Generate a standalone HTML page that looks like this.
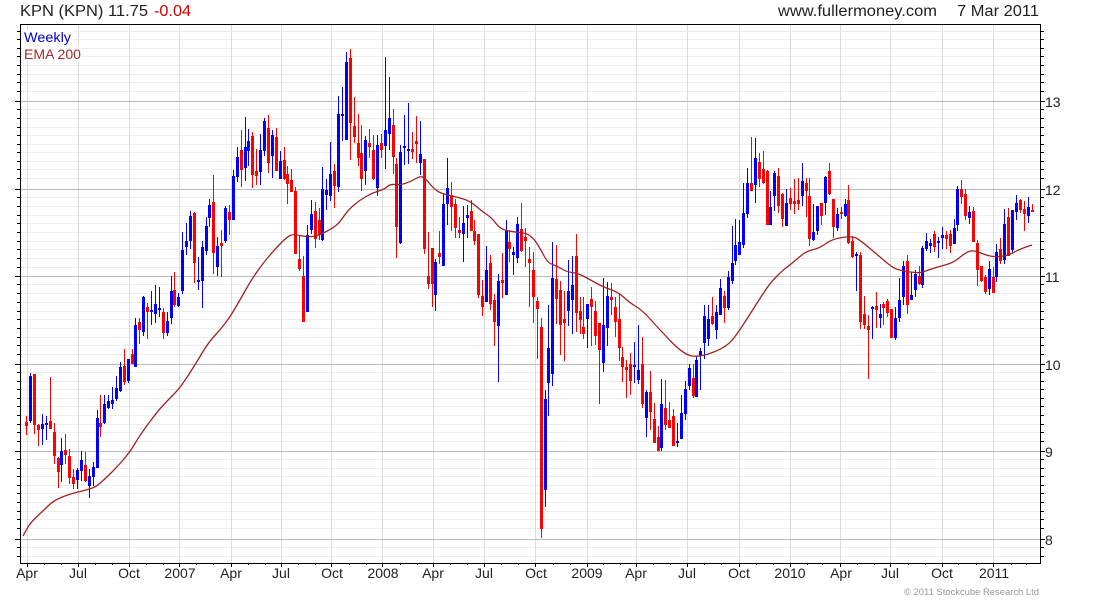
<!DOCTYPE html>
<html lang="en"><head><meta charset="utf-8"><title>KPN (KPN) chart</title>
<style>html,body{margin:0;padding:0;background:#fff;width:1100px;height:600px;overflow:hidden}svg{display:block}text{font-family:"Liberation Sans",Arial,sans-serif}</style>
</head><body>
<svg width="1100" height="600" viewBox="0 0 1100 600" xmlns="http://www.w3.org/2000/svg">
<rect width="1100" height="600" fill="#fff"/>
<g shape-rendering="crispEdges" fill="none">
<path stroke="#ececec" d="M21 31.5H1040M21 39.5H1040M21 48.5H1040M21 56.5H1040M21 65.5H1040M21 74.5H1040M21 82.5H1040M21 91.5H1040M21 109.5H1040M21 118.5H1040M21 127.5H1040M21 135.5H1040M21 144.5H1040M21 152.5H1040M21 161.5H1040M21 169.5H1040M21 178.5H1040M21 197.5H1040M21 206.5H1040M21 215.5H1040M21 223.5H1040M21 232.5H1040M21 241.5H1040M21 249.5H1040M21 258.5H1040M21 267.5H1040M21 284.5H1040M21 293.5H1040M21 302.5H1040M21 311.5H1040M21 319.5H1040M21 328.5H1040M21 337.5H1040M21 345.5H1040M21 354.5H1040M21 372.5H1040M21 381.5H1040M21 389.5H1040M21 398.5H1040M21 406.5H1040M21 415.5H1040M21 424.5H1040M21 432.5H1040M21 441.5H1040M21 459.5H1040M21 468.5H1040M21 476.5H1040M21 485.5H1040M21 493.5H1040M21 502.5H1040M21 511.5H1040M21 519.5H1040M21 528.5H1040M21 547.5H1040M21 556.5H1040"/>
<path stroke="#dcdcdc" d="M27.5 25V563M78.5 25V563M129.5 25V563M179.5 25V563M231.5 25V563M281.5 25V563M331.5 25V563M382.5 25V563M433.5 25V563M484.5 25V563M535.5 25V563M587.5 25V563M636.5 25V563M687.5 25V563M739.5 25V563M790.5 25V563M840.5 25V563M890.5 25V563M942.5 25V563M993.5 25V563"/>
<path stroke="#bcbcbc" d="M21 101.5H1040M21 189.5H1040M21 276.5H1040M21 364.5H1040M21 451.5H1040M21 539.5H1040"/>
<rect x="23" y="30" width="50" height="16" fill="#fff"/>
<rect x="23" y="46" width="59" height="16" fill="#fff"/>
</g>
<g fill="none" shape-rendering="crispEdges">
<path stroke="#0000ff" stroke-width="1" d="M30.5 373V423M42.5 414V445M46.5 416V440M61.5 438V482M77.5 468V489M81.5 451V481M89.5 469V498M93.5 462V486M97.5 410V468M104.5 395V424M108.5 395V409M112.5 387V409M116.5 376V401M120.5 362V392M128.5 359V383M135.5 318V367M143.5 296V336M151.5 291V325M155.5 285V323M159.5 287V317M167.5 312V336M171.5 276V324M178.5 293V307M182.5 232V294M186.5 223V255M190.5 211V249M198.5 257V290M202.5 241V308M206.5 217V255M209.5 199V227M217.5 237V276M225.5 206V243M233.5 170V220M237.5 147V182M245.5 117V181M248.5 129V166M260.5 134V185M264.5 118V156M272.5 130V178M280.5 151V179M307.5 225V312M311.5 200V234M322.5 167V241M326.5 179V210M330.5 142V201M338.5 96V192M342.5 87V141M346.5 52V140M365.5 136V185M377.5 135V196M385.5 57V169M389.5 77V150M400.5 145V244M404.5 115V165M408.5 103V164M420.5 121V175M435.5 259V311M443.5 194V266M447.5 158V225M463.5 206V262M467.5 205V238M486.5 246V302M498.5 274V382M506.5 220V295M513.5 247V275M517.5 217V263M545.5 390V507M548.5 305V416M552.5 242V386M568.5 260V326M572.5 256V334M587.5 304V348M603.5 278V372M607.5 282V346M634.5 342V383M638.5 325V384M646.5 390V437M661.5 379V451M677.5 423V447M681.5 395V439M685.5 381V420M689.5 364V390M696.5 356V397M700.5 348V390M704.5 305V359M708.5 305V346M716.5 305V339M720.5 279V315M728.5 271V310M732.5 226V284M735.5 219V265M739.5 220V255M743.5 183V248M747.5 168V218M755.5 138V203M770.5 191V225M774.5 171V211M786.5 189V226M802.5 163V206M813.5 204V241M817.5 206V235M825.5 176V215M837.5 208V231M845.5 199V217M856.5 252V291M872.5 306V339M880.5 304V328M895.5 307V340M899.5 278V322M903.5 261V305M911.5 272V300M915.5 270V297M922.5 246V288M926.5 233V251M930.5 239V253M938.5 237V258M942.5 227V249M954.5 219V244M957.5 186V231M969.5 206V224M989.5 261V295M996.5 244V282M1004.5 209V264M1012.5 210V252M1016.5 195V220M1028.5 197V223"/>
<path stroke="#ff0000" stroke-width="1" d="M26.5 416V435M34.5 374V434M38.5 424V446M50.5 377V429M54.5 423V464M58.5 457V488M65.5 434V464M69.5 449V484M73.5 469V489M85.5 452V482M100.5 395V437M124.5 349V385M132.5 349V364M139.5 318V344M147.5 303V339M163.5 308V339M174.5 272V307M194.5 212V283M213.5 175V274M221.5 230V277M229.5 205V235M241.5 130V187M252.5 132V188M256.5 149V185M268.5 115V173M276.5 128V171M284.5 147V180M287.5 166V204M291.5 169V192M295.5 187V254M299.5 235V271M303.5 256V322M315.5 202V248M319.5 208V240M334.5 164V208M350.5 49V160M354.5 97V143M358.5 114V166M361.5 125V191M369.5 129V158M373.5 135V180M381.5 134V158M393.5 109V174M396.5 158V258M412.5 132V159M416.5 116V163M424.5 159V254M428.5 232V289M432.5 248V307M439.5 231V264M451.5 182V231M455.5 199V238M459.5 217V238M471.5 200V231M474.5 220V245M478.5 234V298M482.5 280V316M490.5 255V310M494.5 294V346M502.5 253V298M509.5 230V262M521.5 203V252M525.5 228V267M529.5 247V307M533.5 252V323M537.5 297V359M541.5 318V538M556.5 245V324M560.5 281V355M564.5 291V361M576.5 234V332M580.5 297V334M583.5 297V339M591.5 287V346M595.5 301V345M599.5 323V404M611.5 283V315M615.5 297V337M619.5 293V361M622.5 347V382M626.5 360V398M630.5 353V395M642.5 337V408M650.5 371V430M654.5 403V443M658.5 426V451M665.5 380V430M669.5 402V428M673.5 409V446M693.5 364V398M712.5 297V325M724.5 291V323M751.5 137V191M759.5 153V187M763.5 151V184M767.5 170V225M778.5 168V213M782.5 193V227M790.5 188V210M794.5 179V214M798.5 178V210M806.5 178V217M809.5 178V246M821.5 203V225M829.5 163V195M833.5 199V238M841.5 207V219M848.5 185V244M852.5 236V258M860.5 252V329M864.5 296V329M868.5 315V379M876.5 292V328M883.5 302V325M887.5 299V317M891.5 309V338M907.5 255V314M919.5 266V285M934.5 231V252M946.5 231V249M950.5 230V253M961.5 180V204M965.5 189V220M973.5 207V242M977.5 240V286M981.5 266V282M985.5 275V294M993.5 267V293M1000.5 238V264M1008.5 208V256M1020.5 199V213M1024.5 201V231M1032.5 204V212"/>
<path stroke="#0000ff" stroke-width="3" d="M30.5 376V421M42.5 424V429M46.5 423V425M61.5 451V465M77.5 470V480M81.5 460V471M89.5 476V486M93.5 467V477M97.5 418V468M104.5 404V423M108.5 401V408M112.5 400V404M116.5 388V399M120.5 367V391M128.5 359V381M135.5 325V367M143.5 297V332M151.5 310V312M155.5 304V314M159.5 308V310M167.5 321V333M171.5 291V318M178.5 297V306M182.5 250V291M186.5 241V247M190.5 216V241M198.5 280V282M202.5 247V281M206.5 226V251M209.5 205V218M217.5 246V267M225.5 208V241M233.5 176V220M237.5 157V177M245.5 147V168M248.5 141V151M260.5 150V172M264.5 121V151M272.5 135V156M280.5 161V179M307.5 235V312M311.5 214V230M322.5 189V240M326.5 190V195M330.5 174V196M338.5 114V187M342.5 114V116M346.5 62V140M365.5 140V171M377.5 145V188M385.5 130V146M389.5 118V134M400.5 152V243M404.5 146V148M408.5 149V151M420.5 154V163M435.5 262V295M443.5 204V266M447.5 188V204M463.5 223V234M467.5 215V218M486.5 270V302M498.5 281V326M506.5 230V295M513.5 252V255M517.5 224V258M545.5 399V490M548.5 348V383M552.5 278V374M568.5 291V311M572.5 285V300M587.5 304V319M603.5 325V363M607.5 296V328M634.5 365V367M638.5 370V380M646.5 392V418M661.5 404V448M677.5 441V443M681.5 413V439M685.5 389V414M689.5 368V386M696.5 360V397M700.5 351V356M704.5 316V343M708.5 319V339M716.5 312V330M720.5 288V315M728.5 277V308M732.5 263V281M735.5 245V261M739.5 242V255M743.5 213V245M747.5 183V214M755.5 158V185M770.5 207V225M774.5 173V196M786.5 203V226M802.5 181V196M813.5 232V240M817.5 206V231M825.5 177V203M837.5 214V228M845.5 204V216M856.5 254V256M872.5 307V309M880.5 314V318M895.5 318V338M899.5 300V318M903.5 266V297M911.5 295V300M915.5 274V290M922.5 248V285M926.5 241V249M930.5 243V246M938.5 241V243M942.5 235V238M954.5 228V244M957.5 189V225M969.5 212V218M989.5 269V289M996.5 252V277M1004.5 224V260M1012.5 210V250M1016.5 203V212M1028.5 207V216"/>
<path stroke="#ff0000" stroke-width="3" d="M26.5 422V426M34.5 374V425M38.5 425V430M50.5 421V429M54.5 432V456M58.5 458V472M65.5 450V455M69.5 456V478M73.5 477V484M85.5 465V481M100.5 423V427M124.5 366V382M132.5 354V364M139.5 322V330M147.5 307V312M163.5 312V333M174.5 290V305M194.5 213V263M213.5 202V253M221.5 243V246M229.5 212V220M241.5 150V170M252.5 136V175M256.5 171V176M268.5 128V163M276.5 137V171M284.5 160V179M287.5 174V184M291.5 180V192M295.5 191V254M299.5 259V269M303.5 276V322M315.5 211V239M319.5 220V235M334.5 171V186M350.5 58V123M354.5 126V137M358.5 143V158M361.5 153V179M369.5 143V147M373.5 150V179M381.5 143V150M393.5 125V157M396.5 164V227M412.5 149V152M416.5 141V144M424.5 159V249M428.5 276V284M432.5 248V284M439.5 253V257M451.5 195V207M455.5 204V228M459.5 230V233M471.5 211V231M474.5 231V241M478.5 234V295M482.5 296V307M490.5 263V304M494.5 300V322M502.5 280V283M509.5 242V249M521.5 229V251M525.5 237V241M529.5 259V263M533.5 270V297M537.5 301V309M541.5 327V529M556.5 279V299M560.5 290V325M564.5 319V323M576.5 256V313M580.5 311V320M583.5 327V334M591.5 299V307M595.5 311V336M599.5 323V350M611.5 297V300M615.5 307V322M619.5 319V348M622.5 357V367M626.5 367V370M630.5 364V381M642.5 364V404M650.5 392V412M654.5 419V443M658.5 437V451M665.5 408V425M669.5 420V428M673.5 416V446M693.5 378V396M712.5 316V324M724.5 296V308M751.5 183V191M759.5 162V179M763.5 169V183M767.5 171V225M778.5 176V206M782.5 194V219M790.5 198V204M794.5 201V204M798.5 200V204M806.5 183V191M809.5 196V239M821.5 203V216M829.5 171V194M833.5 199V227M841.5 212V214M848.5 200V243M852.5 241V257M860.5 255V322M864.5 314V325M868.5 326V330M876.5 306V310M883.5 304V308M887.5 301V313M891.5 309V338M907.5 261V305M919.5 276V284M934.5 234V247M946.5 235V239M950.5 234V246M961.5 189V197M965.5 194V216M973.5 211V242M977.5 243V270M981.5 266V281M985.5 277V292M993.5 277V293M1000.5 249V261M1008.5 217V256M1020.5 200V210M1024.5 209V214M1032.5 210V212"/>
</g>
<path fill="none" stroke="#9e2424" stroke-width="1.3" stroke-linejoin="round" d="M23 536L26.5 529.5Q30 523 36.5 517Q43 511 48 506Q53 501 60 498Q67 495 72.5 493.5Q78 492 84 490.5Q90 489 93.5 487.5Q97 486 102 481.5Q107 477 112 472Q117 467 123.5 459.5Q130 452 135 443.5Q140 435 148.5 423.5Q157 412 162.5 406Q168 400 174 394Q180 388 187.5 376.5Q195 365 201.5 354Q208 343 214 336.5Q220 330 225 323.5Q230 317 235 308.5Q240 300 245 291Q250 282 256.5 272.5Q263 263 270 255Q277 247 282 242Q287 237 290 235.5Q293 234 300 235.5Q307 237 312.5 236.5Q318 236 325.5 232Q333 228 336.5 225Q340 222 344 216Q348 210 354 205Q360 200 366 196.5Q372 193 378.5 191Q385 189 387.5 186.5Q390 184 395 184.5Q400 185 405 183.5Q410 182 415 179Q420 176 422.5 177Q425 178 430 184Q435 190 439 192Q443 194 450 195.5Q457 197 463.5 199Q470 201 476.5 206.5Q483 212 487.5 215Q492 218 496 223.5Q500 229 506.5 230.5Q513 232 520 232.5Q527 233 531 236.5Q535 240 538.5 246Q542 252 545 257.5Q548 263 552.5 264.5Q557 266 562 269Q567 272 572 272.5Q577 273 582 275.5Q587 278 595 282.5Q603 287 610.5 289.5Q618 292 624 297.5Q630 303 636 306.5Q642 310 651 320Q660 330 671 341.5Q682 353 690 355.5Q698 358 712.5 352.5Q727 347 733.5 338.5Q740 330 748.5 316.5Q757 303 763.5 293Q770 283 776.5 276.5Q783 270 786.5 267.5Q790 265 794 261.5Q798 258 802.5 254.5Q807 251 813.5 249.5Q820 248 826 243.5Q832 239 842 237.5Q852 236 856 238Q860 240 870 248.5Q880 257 886.5 262.5Q893 268 898 269.5Q903 271 910.5 272Q918 273 920.5 272.5Q923 272 930 269.5Q937 267 945 265Q953 263 959 258Q965 253 969 251.5Q973 250 978 252Q983 254 988 255.5Q993 257 1000 256.5Q1007 256 1013.5 252.5Q1020 249 1026 247L1032 245"/>
<g fill="none" shape-rendering="crispEdges" stroke="#000">
<rect x="20.5" y="24.5" width="1020" height="539"/>
<path d="M17 31.5H20M17 39.5H20M17 48.5H20M17 56.5H20M17 65.5H20M17 74.5H20M17 82.5H20M17 91.5H20M15 101.5H20M17 109.5H20M17 118.5H20M17 127.5H20M17 135.5H20M17 144.5H20M17 152.5H20M17 161.5H20M17 169.5H20M17 178.5H20M15 189.5H20M17 197.5H20M17 206.5H20M17 215.5H20M17 223.5H20M17 232.5H20M17 241.5H20M17 249.5H20M17 258.5H20M17 267.5H20M15 276.5H20M17 284.5H20M17 293.5H20M17 302.5H20M17 311.5H20M17 319.5H20M17 328.5H20M17 337.5H20M17 345.5H20M17 354.5H20M15 364.5H20M17 372.5H20M17 381.5H20M17 389.5H20M17 398.5H20M17 406.5H20M17 415.5H20M17 424.5H20M17 432.5H20M17 441.5H20M15 451.5H20M17 459.5H20M17 468.5H20M17 476.5H20M17 485.5H20M17 493.5H20M17 502.5H20M17 511.5H20M17 519.5H20M17 528.5H20M15 539.5H20M17 547.5H20M17 556.5H20"/>
<path d="M1041 31.5H1044M1041 39.5H1044M1041 48.5H1044M1041 56.5H1044M1041 65.5H1044M1041 74.5H1044M1041 82.5H1044M1041 91.5H1044M1041 101.5H1045M1041 109.5H1044M1041 118.5H1044M1041 127.5H1044M1041 135.5H1044M1041 144.5H1044M1041 152.5H1044M1041 161.5H1044M1041 169.5H1044M1041 178.5H1044M1041 189.5H1045M1041 197.5H1044M1041 206.5H1044M1041 215.5H1044M1041 223.5H1044M1041 232.5H1044M1041 241.5H1044M1041 249.5H1044M1041 258.5H1044M1041 267.5H1044M1041 276.5H1045M1041 284.5H1044M1041 293.5H1044M1041 302.5H1044M1041 311.5H1044M1041 319.5H1044M1041 328.5H1044M1041 337.5H1044M1041 345.5H1044M1041 354.5H1044M1041 364.5H1045M1041 372.5H1044M1041 381.5H1044M1041 389.5H1044M1041 398.5H1044M1041 406.5H1044M1041 415.5H1044M1041 424.5H1044M1041 432.5H1044M1041 441.5H1044M1041 451.5H1045M1041 459.5H1044M1041 468.5H1044M1041 476.5H1044M1041 485.5H1044M1041 493.5H1044M1041 502.5H1044M1041 511.5H1044M1041 519.5H1044M1041 528.5H1044M1041 539.5H1045M1041 547.5H1044M1041 556.5H1044"/>
<path d="M27.5 564V567M78.5 564V567M129.5 564V567M179.5 564V567M231.5 564V567M281.5 564V567M331.5 564V567M382.5 564V567M433.5 564V567M484.5 564V567M535.5 564V567M587.5 564V567M636.5 564V567M687.5 564V567M739.5 564V567M790.5 564V567M840.5 564V567M890.5 564V567M942.5 564V567M993.5 564V567M44.5 564V565M61.5 564V565M95.5 564V565M112.5 564V565M146.5 564V565M163.5 564V565M196.5 564V565M213.5 564V565M248.5 564V565M265.5 564V565M298.5 564V565M315.5 564V565M349.5 564V565M366.5 564V565M400.5 564V565M417.5 564V565M450.5 564V565M467.5 564V565M501.5 564V565M518.5 564V565M553.5 564V565M570.5 564V565M603.5 564V565M620.5 564V565M653.5 564V565M670.5 564V565M704.5 564V565M721.5 564V565M756.5 564V565M773.5 564V565M807.5 564V565M822.5 564V565M857.5 564V565M874.5 564V565M908.5 564V565M925.5 564V565M958.5 564V565M976.5 564V565M1011.5 564V565M1026.5 564V565"/>
</g>
<text x="20" y="16" font-size="16" fill="#222" textLength="128" lengthAdjust="spacingAndGlyphs">KPN (KPN) 11.75</text>
<text x="154" y="16" font-size="16" fill="#cc0000" textLength="37" lengthAdjust="spacingAndGlyphs">-0.04</text>
<text x="778" y="16" font-size="16" fill="#222" textLength="159" lengthAdjust="spacingAndGlyphs">www.fullermoney.com</text>
<text x="957" y="16" font-size="16" fill="#222" textLength="82" lengthAdjust="spacingAndGlyphs">7 Mar 2011</text>
<text x="24" y="42" font-size="14" fill="#0000cc" textLength="47" lengthAdjust="spacingAndGlyphs">Weekly</text>
<text x="24" y="59" font-size="14" fill="#a52a2a" textLength="57" lengthAdjust="spacingAndGlyphs">EMA 200</text>
<g font-size="14" fill="#222">
<text x="1045" y="107">13</text><text x="1045" y="195">12</text><text x="1045" y="282">11</text><text x="1045" y="370">10</text><text x="1045" y="457">9</text><text x="1045" y="545">8</text>
</g>
<g font-size="14" fill="#222" text-anchor="middle">
<text x="27" y="578">Apr</text><text x="78" y="578">Jul</text><text x="129" y="578">Oct</text><text x="180" y="578">2007</text><text x="231" y="578">Apr</text><text x="281" y="578">Jul</text><text x="332" y="578">Oct</text><text x="383" y="578">2008</text><text x="433" y="578">Apr</text><text x="484" y="578">Jul</text><text x="536" y="578">Oct</text><text x="587" y="578">2009</text><text x="636" y="578">Apr</text><text x="687" y="578">Jul</text><text x="739" y="578">Oct</text><text x="790" y="578">2010</text><text x="841" y="578">Apr</text><text x="890" y="578">Jul</text><text x="942" y="578">Oct</text><text x="994" y="578">2011</text>
</g>
<text x="904" y="595" font-size="9.5" fill="#999" textLength="135" lengthAdjust="spacing">© 2011 Stockcube Research Ltd</text>
</svg>
</body></html>
